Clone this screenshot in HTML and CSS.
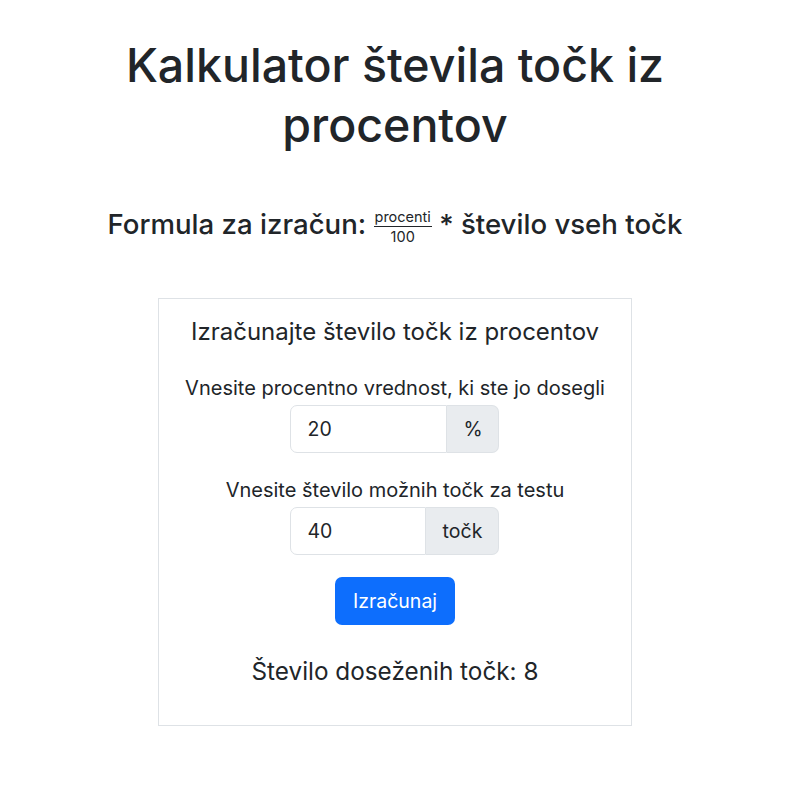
FILE: index.html
```html
<!DOCTYPE html>
<html lang="sl">
<head>
<meta charset="utf-8">
<title>Kalkulator števila točk iz procentov</title>
<link rel="stylesheet" href="styles.css">
</head>
<body>
<main class="container">
  <h1 class="title">Kalkulator števila točk iz procentov</h1>
  <h3 class="formula">Formula za izračun:
    <span class="frac"><span class="num">procenti</span><span class="den">100</span></span>
    * število vseh točk</h3>
  <section class="card">
    <h5 class="card-title">Izračunajte število točk iz procentov</h5>
    <div class="field">
      <label class="label" for="pct">Vnesite procentno vrednost, ki ste jo dosegli</label>
      <div class="input-group">
        <input id="pct" class="input input-pct" type="text" value="20">
        <span class="addon addon-pct">%</span>
      </div>
    </div>
    <div class="field">
      <label class="label" for="pts">Vnesite število možnih točk za testu</label>
      <div class="input-group">
        <input id="pts" class="input input-pts" type="text" value="40">
        <span class="addon addon-pts">točk</span>
      </div>
    </div>
    <button class="btn" type="button">Izračunaj</button>
    <p class="result">Število doseženih točk: 8</p>
  </section>
</main>
</body>
</html>
```

FILE: styles.css
```css
* { box-sizing: border-box; }
html, body { margin: 0; }
body {
  background: #fff;
  color: #212529;
  font-family: Inter, "Noto Sans", "Liberation Sans", sans-serif;
  font-size: 19px;
  padding-right: 10px;
}
.container {
  width: 645px;
  margin: 0 auto;
  padding-top: 35px;
  text-align: center;
}
.title {
  margin: 0 0 10px;
  font-size: 46.5px;
  font-weight: 500;
  line-height: 60px;
}
.formula {
  margin: 53px 0 0;
  font-size: 27.6px;
  font-weight: 500;
  line-height: 33px;
}
.frac {
  display: inline-flex;
  flex-direction: column;
  vertical-align: middle;
  font-size: 14.5px;
  font-weight: 400;
  line-height: 15px;
  position: relative;
  top: 0;
}
.num { border-bottom: 1px solid #212529; padding: 0 1px 2px; }
.den { padding-top: 2px; }
.card {
  width: 474px;
  margin: 54px auto 0;
  border: 1px solid #dee2e6;
  padding: 18px 20px 39px;
  display: flex;
  flex-direction: column;
  align-items: center;
}
.card-title {
  margin: 0 0 26px;
  font-size: 24px;
  font-weight: 400;
  line-height: 30px;
}
.field {
  display: flex;
  flex-direction: column;
  align-items: center;
  margin-bottom: 22px;
}
.label {
  font-size: 20px;
  line-height: 30px;
  margin-bottom: 2px;
}
.input-group { display: flex; height: 48px; }
.input {
  font: inherit;
  font-size: 19.5px;
  color: #212529;
  border: 1px solid #dee2e6;
  border-radius: 7px 0 0 7px;
  padding: 0 16px;
  outline: none;
  background: #fff;
}
.input-pct { width: 157px; }
.input-pts { width: 136px; }
.addon {
  display: flex;
  align-items: center;
  justify-content: center;
  background: #e9ecef;
  border: 1px solid #dee2e6;
  border-left: 0;
  border-radius: 0 7px 7px 0;
  font-size: 19.5px;
}
.addon-pct { width: 52px; }
.addon-pts { width: 73px; }
.btn {
  font: inherit;
  font-size: 19.5px;
  color: #fff;
  background: #0d6efd;
  border: 0;
  border-radius: 7px;
  width: 120px;
  height: 48px;
}
.result {
  margin: 31px 0 0;
  font-size: 24.3px;
  line-height: 30px;
}
```
